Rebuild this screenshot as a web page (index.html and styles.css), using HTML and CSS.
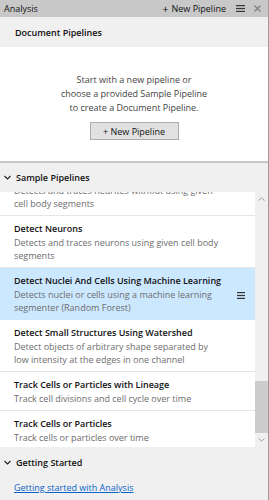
FILE: index.html
```html
<!DOCTYPE html>
<html>
<head>
<meta charset="utf-8">
<link rel="stylesheet" href="styles.css">
</head>
<body>
<div class="panel">
  <div class="titlebar">
    <span class="tb-title">Analysis</span>
    <div class="tb-actions">
      <span class="tb-new"><span class="plus">+</span> New Pipeline</span>
      <svg class="tb-menu" width="9" height="7" viewBox="0 0 9 7"><rect x="0" y="0" width="9" height="1.2" fill="#333"/><rect x="0" y="2.9" width="9" height="1.2" fill="#333"/><rect x="0" y="5.8" width="9" height="1.2" fill="#333"/></svg>
      <svg class="tb-close" width="7" height="7" viewBox="0 0 7 7"><path d="M0.5 0.5 L6.5 6.5 M6.5 0.5 L0.5 6.5" stroke="#7a7a7a" stroke-width="1.1" fill="none"/></svg>
    </div>
  </div>

  <div class="sec-header doc-header">Document Pipelines</div>

  <div class="empty">
    <p class="empty-text">Start with a new pipeline or<br>choose a provided Sample Pipeline<br>to create a Document Pipeline.</p>
    <div class="btn">+ New Pipeline</div>
  </div>

  <div class="splitter"></div>

  <div class="sec-header"><svg class="chev" width="7" height="5" viewBox="0 0 7 5"><path d="M0.5 1 L3.5 4 L6.5 1" stroke="#222" stroke-width="1.1" fill="none"/></svg>Sample Pipelines</div>

  <div class="list-wrap">
    <div class="list">
      <div class="item first">
        <div class="item-title">Detect Neurites</div>
        <div class="item-desc">Detects and traces neurites without using given cell body segments</div>
      </div>
      <div class="item">
        <div class="item-title">Detect Neurons</div>
        <div class="item-desc">Detects and traces neurons using given cell body segments</div>
      </div>
      <div class="item selected">
        <div class="item-body">
          <div class="item-title">Detect Nuclei And Cells Using Machine Learning</div>
          <div class="item-desc">Detects nuclei or cells using a machine learning segmenter (Random Forest)</div>
        </div>
        <svg class="item-menu" width="8" height="7" viewBox="0 0 8 7"><rect x="0" y="0" width="8" height="1.2" fill="#333"/><rect x="0" y="2.9" width="8" height="1.2" fill="#333"/><rect x="0" y="5.8" width="8" height="1.2" fill="#333"/></svg>
      </div>
      <div class="item">
        <div class="item-title">Detect Small Structures Using Watershed</div>
        <div class="item-desc">Detect objects of arbitrary shape separated by low intensity at the edges in one channel</div>
      </div>
      <div class="item">
        <div class="item-title">Track Cells or Particles with Lineage</div>
        <div class="item-desc">Track cell divisions and cell cycle over time</div>
      </div>
      <div class="item">
        <div class="item-title">Track Cells or Particles</div>
        <div class="item-desc">Track cells or particles over time</div>
      </div>
    </div>
    <div class="scrollbar">
      <div class="sb-btn"><svg width="7" height="4" viewBox="0 0 7 4"><path d="M0.5 3.5 L3.5 0.8 L6.5 3.5" stroke="#a0a0a0" stroke-width="1" fill="none"/></svg></div>
      <div class="sb-track"><div class="sb-thumb"></div></div>
      <div class="sb-btn"><svg width="7" height="4" viewBox="0 0 7 4"><path d="M0.5 0.5 L3.5 3.2 L6.5 0.5" stroke="#a0a0a0" stroke-width="1" fill="none"/></svg></div>
    </div>
  </div>

  <div class="sec-header gs-header"><svg class="chev" width="7" height="5" viewBox="0 0 7 5"><path d="M0.5 1 L3.5 4 L6.5 1" stroke="#222" stroke-width="1.1" fill="none"/></svg>Getting Started</div>
  <div class="links"><a class="link" href="#">Getting started with Analysis</a></div>
</div>
</body>
</html>
```

FILE: styles.css
```css
html, body {
  margin: 0;
  padding: 0;
}
body {
  width: 269px;
  height: 500px;
  overflow: hidden;
  font-family: "Open Sans", "Noto Sans", sans-serif;
  font-size: 9px;
  color: #1a1a1a;
  background: #f0f0f0;
}
.panel {
  width: 268px;
  height: 500px;
  border-right: 1px solid #9a9a9a;
  display: flex;
  flex-direction: column;
  background: #f0f0f0;
}
.titlebar {
  height: 17px;
  background: #c8c8c8;
  display: flex;
  align-items: center;
  justify-content: space-between;
  padding: 0 7px 0 4px;
  flex: none;
}
.tb-title {
  color: #111;
}
.tb-actions {
  display: flex;
  align-items: center;
}
.tb-new {
  color: #111;
  display: flex;
  align-items: center;
}
.plus {
  font-size: 11px;
  margin-right: 3px;
}
.tb-menu {
  margin-left: 10px;
}
.tb-close {
  margin-left: 9px;
}
.sec-header {
  height: 29px;
  flex: none;
  display: flex;
  align-items: center;
  padding-left: 4px;
  font-weight: 600;
  color: #111;
  background: #f0f0f0;
}
.doc-header {
  height: 30px;
  padding-left: 15px;
  padding-top: 1px;
  box-sizing: border-box;
}
.chev {
  margin-right: 5px;
}
.empty {
  height: 114px;
  flex: none;
  background: #fff;
  display: flex;
  flex-direction: column;
  align-items: center;
  box-sizing: border-box;
  padding-top: 26px;
}
.empty-text {
  margin: 0;
  text-align: center;
  line-height: 14px;
  color: #444;
}
.btn {
  margin-top: 7px;
  width: 87px;
  height: 16px;
  border: 1px solid #adadad;
  background: #e1e1e1;
  display: flex;
  align-items: center;
  justify-content: center;
  color: #111;
}
.splitter {
  height: 2px;
  flex: none;
  background: #c8c8c8;
}
.list-wrap {
  height: 255px;
  flex: none;
  display: flex;
  background: #fff;
}
.list {
  width: 255px;
  overflow: hidden;
  background: #fff;
}
.item {
  padding: 6px 14px 5px 14px;
  border-bottom: 1px solid #e6e6e6;
}
.item.first {
  margin-top: -28px;
}
.item.selected {
  background: #cce8ff;
  border-bottom-color: #cce8ff;
  display: flex;
  align-items: center;
  padding-right: 10px;
}
.item-body {
  flex: 1;
}
.item-menu {
  margin-left: 6px;
  margin-top: 2px;
}
.item-title {
  font-weight: 600;
  line-height: 14px;
  color: #111;
  white-space: nowrap;
}
.item-desc {
  line-height: 13px;
  color: #6d6d6d;
  padding-right: 21px;
}
.selected .item-desc {
  padding-right: 0;
}
.scrollbar {
  width: 13px;
  display: flex;
  flex-direction: column;
  background: #f0f0f0;
}
.sb-btn {
  height: 14px;
  display: flex;
  align-items: center;
  justify-content: center;
  flex: none;
}
.sb-track {
  flex: 1;
  display: flex;
  flex-direction: column;
  justify-content: flex-end;
}
.sb-thumb {
  height: 52px;
  background: #cdcdcd;
}
.gs-header {
  height: 31px;
}
.links {
  padding: 3px 0 0 14px;
}
.link {
  color: #0a63c9;
  text-decoration: underline;
}
```
